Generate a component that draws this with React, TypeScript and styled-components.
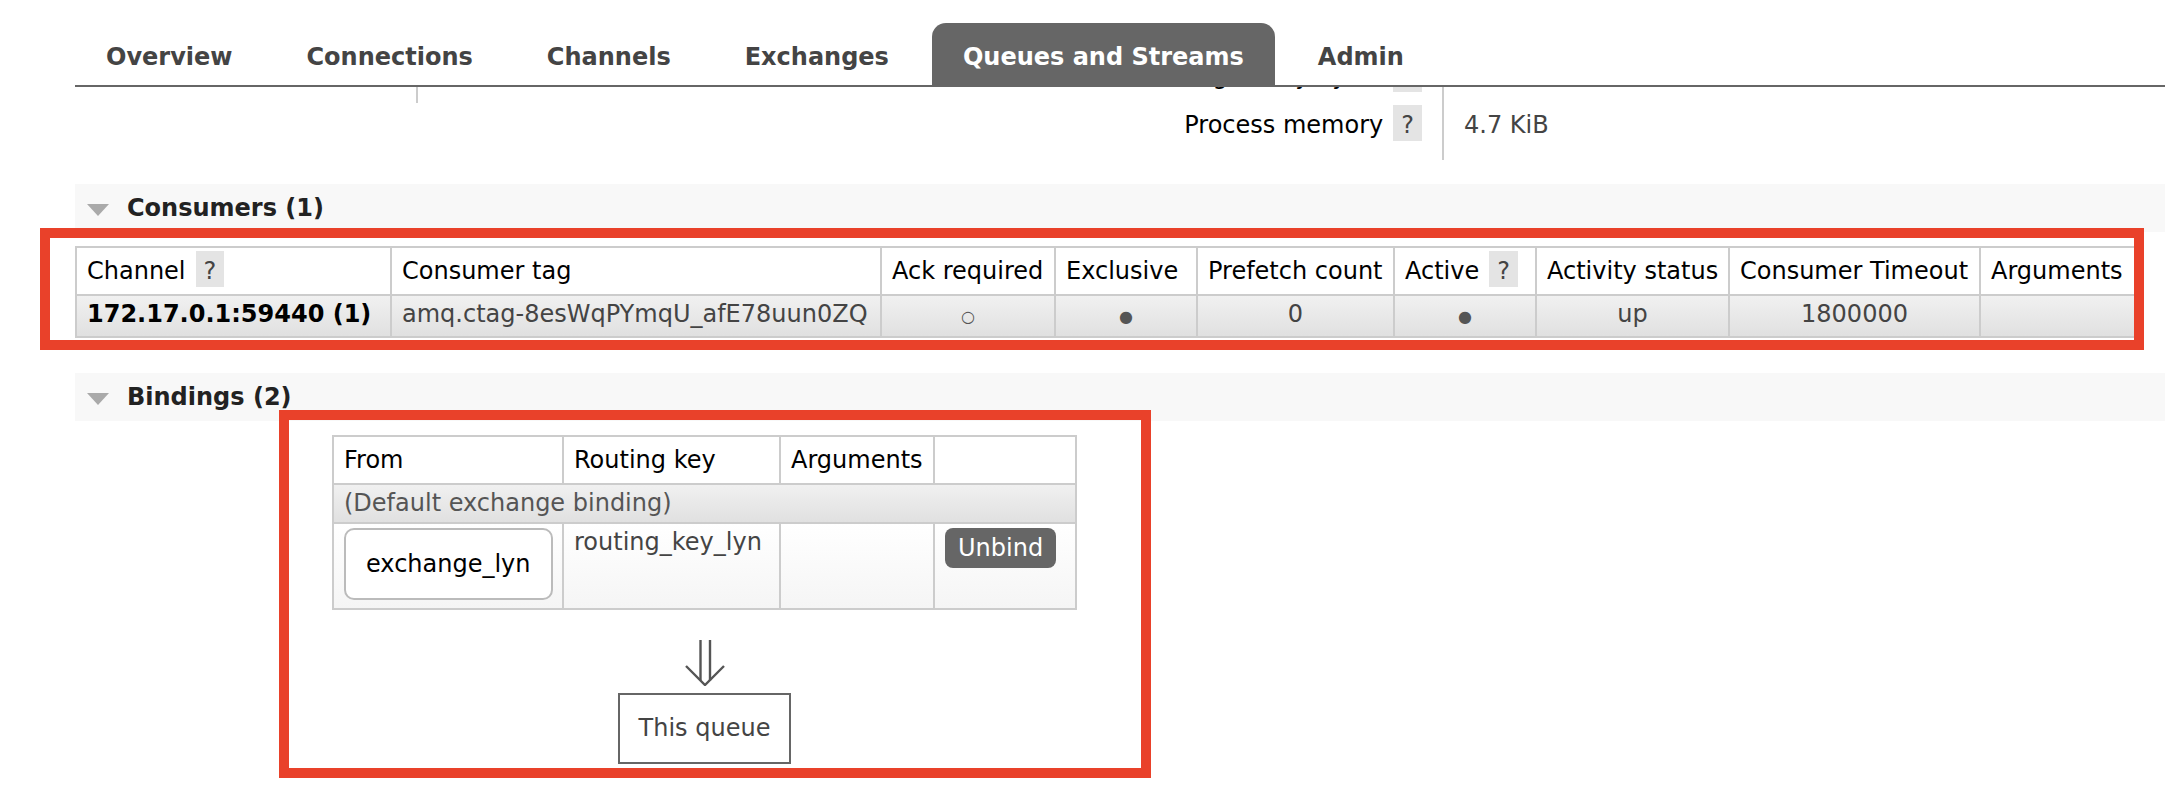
import React from "react";
import styled, { createGlobalStyle } from "styled-components";

const GlobalStyle = createGlobalStyle`
  html, body { margin: 0; padding: 0; background: #fff; }
  body {
    font-family: "DejaVu Sans", Verdana, sans-serif;
    font-size: 24px;
    line-height: 28px;
    color: #444;
  }
  * { box-sizing: border-box; }
`;

const Page = styled.div`
  position: relative;
  width: 2165px;
  height: 791px;
  overflow: hidden;
`;

/* ---------- top menu ---------- */
const Nav = styled.nav`
  margin-left: 75px;
  padding-top: 23px;
  display: flex;
  gap: 12px;
  border-bottom: 2px solid #666;
`;

const Tab = styled.a<{ $active?: boolean }>`
  display: block;
  padding: 20px 31px 14px;
  font-weight: bold;
  font-size: 24px;
  line-height: 28px;
  white-space: nowrap;
  text-decoration: none;
  color: ${(p) => (p.$active ? "#fff" : "#444")};
  background: ${(p) => (p.$active ? "#666" : "transparent")};
  border-radius: 14px 14px 0 0;
`;

/* ---------- details tail (scrolled under the menu) ---------- */
const DetailsClip = styled.div`
  height: 97px;
  overflow: hidden;
  padding-left: 75px;
  display: flex;
  align-items: flex-start;
`;

const LeftColumnTail = styled.div`
  flex: none;
  width: 343px;
  height: 16px;
  border-right: 2px solid #ccc;
`;

const StatsGrid = styled.div`
  margin-top: -37px;
  display: grid;
  grid-template-columns: 1024px auto;
`;

const StatLabel = styled.div`
  padding: 12px 20px 9px 0;
  text-align: right;
  color: #000;
  white-space: nowrap;
`;

const StatValue = styled.div<{ $last?: boolean }>`
  border-left: 2px solid #ccc;
  padding: 12px 0 ${(p) => (p.$last ? "21px" : "9px")} 20px;
  color: #444;
  white-space: nowrap;
`;

const Help = styled.span`
  display: inline-block;
  margin: -6px 0 -2px 10px;
  padding: 6px 8px 2px;
  background: #e4e4e4;
  color: #444;
  line-height: 28px;
  font-weight: normal;
`;

/* ---------- sections ---------- */
const Section = styled.section<{ $gapAfter?: number }>`
  margin-left: 75px;
  margin-bottom: ${(p) => p.$gapAfter ?? 0}px;
`;

const SectionHeader = styled.h2`
  margin: 0;
  height: 48px;
  padding: 10px 12px;
  background: #f8f8f8;
  display: flex;
  align-items: center;
  gap: 18px;
  font-size: 24px;
  line-height: 28px;
  font-weight: bold;
  color: #222;
`;

const Toggle = styled.span`
  flex: none;
  width: 0;
  height: 0;
  margin-top: 3px;
  border-left: 11px solid transparent;
  border-right: 11px solid transparent;
  border-top: 12px solid #aaa;
`;

/* ---------- tables ---------- */
const DataTable = styled.table<{ $width: number }>`
  border-collapse: collapse;
  table-layout: fixed;
  width: ${(p) => p.$width}px;
  margin-top: 14px;
  border: 2px solid #ccc;
`;

const Th = styled.th`
  border: 2px solid #ccc;
  padding: 9px 10px;
  text-align: left;
  font-weight: normal;
  color: #000;
  white-space: nowrap;
  background: #fff;
  line-height: 28px;
  vertical-align: top;
`;

const Row = styled.tr<{ $tone: "alt1" | "alt2" }>`
  background: ${(p) =>
    p.$tone === "alt1"
      ? "linear-gradient(#f1f1f1, #e0e0e0)"
      : "linear-gradient(#ffffff, #f5f5f5)"};
`;

const Td = styled.td<{ $center?: boolean; $bold?: boolean; $dark?: boolean }>`
  border: 2px solid #ccc;
  padding: 4px 10px 5px;
  text-align: ${(p) => (p.$center ? "center" : "left")};
  font-weight: ${(p) => (p.$bold ? "bold" : "normal")};
  color: ${(p) => (p.$dark ? "#000" : "#444")};
  white-space: nowrap;
  overflow: hidden;
  vertical-align: top;
  line-height: 28px;
`;

const Flag = styled.span`
  font-size: 16px;
  color: #555;
`;

const SpanCell = styled.td`
  border: 2px solid #ccc;
  padding: 4px 10px 5px;
  color: #555;
  line-height: 28px;
  white-space: nowrap;
`;

/* ---------- bindings diagram ---------- */
const BindingsWrapper = styled.div`
  margin-left: 257px;
  width: max-content;
  display: flex;
  flex-direction: column;
  align-items: center;
`;

const ExchangeBox = styled.span`
  display: block;
  width: max-content;
  padding: 20px;
  border: 2px solid #bbb;
  border-radius: 10px;
  background: #fff;
  color: #000;
  margin-bottom: 3px;
`;

const UnbindButton = styled.button`
  display: block;
  font-family: "DejaVu Sans", Verdana, sans-serif;
  font-size: 24px;
  line-height: 28px;
  padding: 6px 13px;
  border: none;
  border-radius: 8px;
  background: #666;
  color: #fff;
`;

const ArrowIcon = styled.svg`
  display: block;
  margin-top: 30px;
  margin-bottom: 7px;
`;

const QueueBox = styled.div`
  padding: 19px 19px 20px;
  border: 2px solid #666;
  color: #444;
  white-space: nowrap;
`;

/* ---------- annotation boxes ---------- */
const Annotation = styled.div<{ $left: number; $top: number; $w: number; $h: number }>`
  position: absolute;
  left: ${(p) => p.$left}px;
  top: ${(p) => p.$top}px;
  width: ${(p) => p.$w}px;
  height: ${(p) => p.$h}px;
  border: 10px solid #e9412a;
  pointer-events: none;
`;

const tabs = ["Overview", "Connections", "Channels", "Exchanges", "Queues and Streams", "Admin"];
const consumerCols = [315, 490, 174, 142, 197, 142, 193, 251, 156];
const bindingCols = [230, 217, 154, 142];

export default function App() {
  return (
    <Page>
      <GlobalStyle />
      <Nav>
        {tabs.map((t) => (
          <Tab key={t} $active={t === "Queues and Streams"}>
            {t}
          </Tab>
        ))}
      </Nav>

      <DetailsClip>
        <LeftColumnTail />
        <StatsGrid>
          <StatLabel>
            Message body bytes<Help>?</Help>
          </StatLabel>
          <StatValue>0 B</StatValue>
          <StatLabel>
            Process memory<Help>?</Help>
          </StatLabel>
          <StatValue $last>4.7 KiB</StatValue>
        </StatsGrid>
      </DetailsClip>

      <Section $gapAfter={35}>
        <SectionHeader>
          <Toggle />
          Consumers (1)
        </SectionHeader>
        <DataTable $width={consumerCols.reduce((a, b) => a + b, 0)}>
          <colgroup>
            {consumerCols.map((w, i) => (
              <col key={i} style={{ width: w }} />
            ))}
          </colgroup>
          <thead>
            <tr>
              <Th>
                Channel<Help>?</Help>
              </Th>
              <Th>Consumer tag</Th>
              <Th>Ack required</Th>
              <Th>Exclusive</Th>
              <Th>Prefetch count</Th>
              <Th>
                Active<Help>?</Help>
              </Th>
              <Th>Activity status</Th>
              <Th>Consumer Timeout</Th>
              <Th>Arguments</Th>
            </tr>
          </thead>
          <tbody>
            <Row $tone="alt1">
              <Td $bold $dark>172.17.0.1:59440 (1)</Td>
              <Td>amq.ctag-8esWqPYmqU_afE78uun0ZQ</Td>
              <Td $center>
                <Flag>○</Flag>
              </Td>
              <Td $center>
                <Flag>●</Flag>
              </Td>
              <Td $center>0</Td>
              <Td $center>
                <Flag>●</Flag>
              </Td>
              <Td $center>up</Td>
              <Td $center>1800000</Td>
              <Td></Td>
            </Row>
          </tbody>
        </DataTable>
      </Section>

      <Section>
        <SectionHeader>
          <Toggle />
          Bindings (2)
        </SectionHeader>
        <BindingsWrapper>
          <DataTable $width={bindingCols.reduce((a, b) => a + b, 0)}>
            <colgroup>
              {bindingCols.map((w, i) => (
                <col key={i} style={{ width: w }} />
              ))}
            </colgroup>
            <thead>
              <tr>
                <Th>From</Th>
                <Th>Routing key</Th>
                <Th>Arguments</Th>
                <Th></Th>
              </tr>
            </thead>
            <tbody>
              <Row $tone="alt1">
                <SpanCell colSpan={4}>(Default exchange binding)</SpanCell>
              </Row>
              <Row $tone="alt2">
                <Td>
                  <ExchangeBox>exchange_lyn</ExchangeBox>
                </Td>
                <Td>routing_key_lyn</Td>
                <Td></Td>
                <Td>
                  <UnbindButton>Unbind</UnbindButton>
                </Td>
              </Row>
            </tbody>
          </DataTable>
          <ArrowIcon width="40" height="46" viewBox="0 0 40 46" fill="none" stroke="#555" strokeWidth="2.4">
            <line x1="15.5" y1="0" x2="15.5" y2="40.5" />
            <line x1="25" y1="0" x2="25" y2="40.5" />
            <polyline points="1,26 20,45 39,26" />
          </ArrowIcon>
          <QueueBox>This queue</QueueBox>
        </BindingsWrapper>
      </Section>

      <Annotation $left={40} $top={228} $w={2104} $h={122} />
      <Annotation $left={279} $top={410} $w={872} $h={368} />
    </Page>
  );
}
